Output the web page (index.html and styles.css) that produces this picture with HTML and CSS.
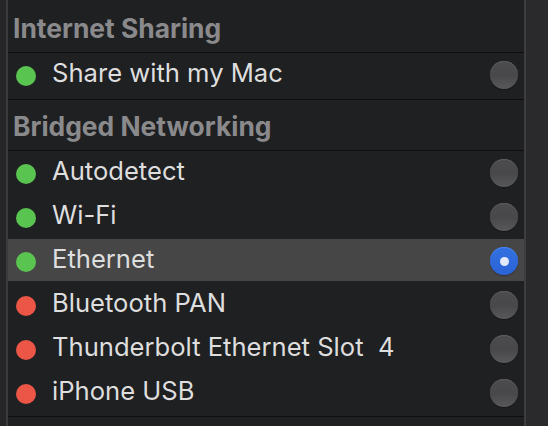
FILE: index.html
```html
<!DOCTYPE html>
<html lang="en">

<head>
    <title>Network</title>
    <link rel="stylesheet" href="styles.css">
</head>

<body>
    <div class="window">
        <div class="gutter"></div>
        <div class="panel">
            <!-- internet sharing -->
            <div class="section-header first">Internet Sharing</div>
            <div class="section single">
                <div class="row">
                    <span class="status green"></span>
                    <span class="label">Share with my Mac</span>
                    <span class="radio"></span>
                </div>
            </div>
            <!-- bridged -->
            <div class="section-header">Bridged Networking</div>
            <div class="section">
                <div class="row">
                    <span class="status green"></span>
                    <span class="label">Autodetect</span>
                    <span class="radio"></span>
                </div>
                <div class="row">
                    <span class="status green"></span>
                    <span class="label">Wi-Fi</span>
                    <span class="radio"></span>
                </div>
                <div class="row selected">
                    <span class="status green"></span>
                    <span class="label">Ethernet</span>
                    <span class="radio checked"></span>
                </div>
                <div class="row">
                    <span class="status red"></span>
                    <span class="label">Bluetooth PAN</span>
                    <span class="radio"></span>
                </div>
                <div class="row">
                    <span class="status red"></span>
                    <span class="label">Thunderbolt Ethernet Slot&nbsp; 4</span>
                    <span class="radio"></span>
                </div>
                <div class="row">
                    <span class="status red"></span>
                    <span class="label">iPhone USB</span>
                    <span class="radio"></span>
                </div>
            </div>
        </div>
        <div class="sidebar"></div>
    </div>
</body>

</html>
```

FILE: styles.css
```css
body {
    margin: 0;
    padding: 0;
    background-color: #1f2022;
    font-family: Inter, "Liberation Sans", sans-serif;
    overflow: hidden;
}

.window {
    display: flex;
    height: 426px;
}

.gutter {
    width: 6px;
    background-color: #262628;
    border-right: 2px solid #3b3b3d;
}

.panel {
    width: 516px;
    background-color: #1f2022;
}

.sidebar {
    flex: 1;
    background-color: #2a2a2c;
    border-left: 2px solid #3d3d3f;
}

/* headers */
.section-header {
    height: 51px;
    box-sizing: border-box;
    padding: 11px 0 0 5px;
    font-size: 26.4px;
    font-weight: 700;
    line-height: 30px;
    color: #8a8a8c;
    border-bottom: 1px solid #0f0f10;
}

.section-header.first {
    height: 53px;
    padding-top: 13px;
}

.section {
    padding-bottom: 1px;
    border-bottom: 1px solid #0f0f10;
}

.section.single {
    padding-bottom: 2px;
}

.row {
    display: flex;
    align-items: center;
    height: 42px;
    margin-bottom: 2px;
    padding: 0 6px 0 8px;
}

.row.selected {
    background-color: #464646;
}

.status {
    width: 20px;
    height: 20px;
    border-radius: 50%;
    margin-top: 4px;
    flex-shrink: 0;
}

.status.green {
    background-color: #5ac451;
}

.status.red {
    background-color: #ec5647;
}

.label {
    flex: 1;
    margin-left: 16px;
    padding-bottom: 4px;
    font-size: 25.6px;
    color: #dedede;
    white-space: pre;
}

.radio {
    width: 28px;
    height: 28px;
    border-radius: 50%;
    margin-top: 2px;
    box-sizing: border-box;
    background: linear-gradient(#4c4c4e, #48484a 50%, #58585a);
    box-shadow: inset 0 1px 0 #5c5c5e, 0 1px 1px rgba(0, 0, 0, 0.3);
}

.radio.checked {
    display: flex;
    align-items: center;
    justify-content: center;
    background: linear-gradient(#3271e0, #2a62d6);
    box-shadow: inset 0 1px 0 #4a83ea, 0 1px 1px rgba(0, 0, 0, 0.3);
}

.radio.checked::after {
    content: "";
    width: 9px;
    height: 9px;
    border-radius: 50%;
    background-color: #e1e9fb;
}
```
